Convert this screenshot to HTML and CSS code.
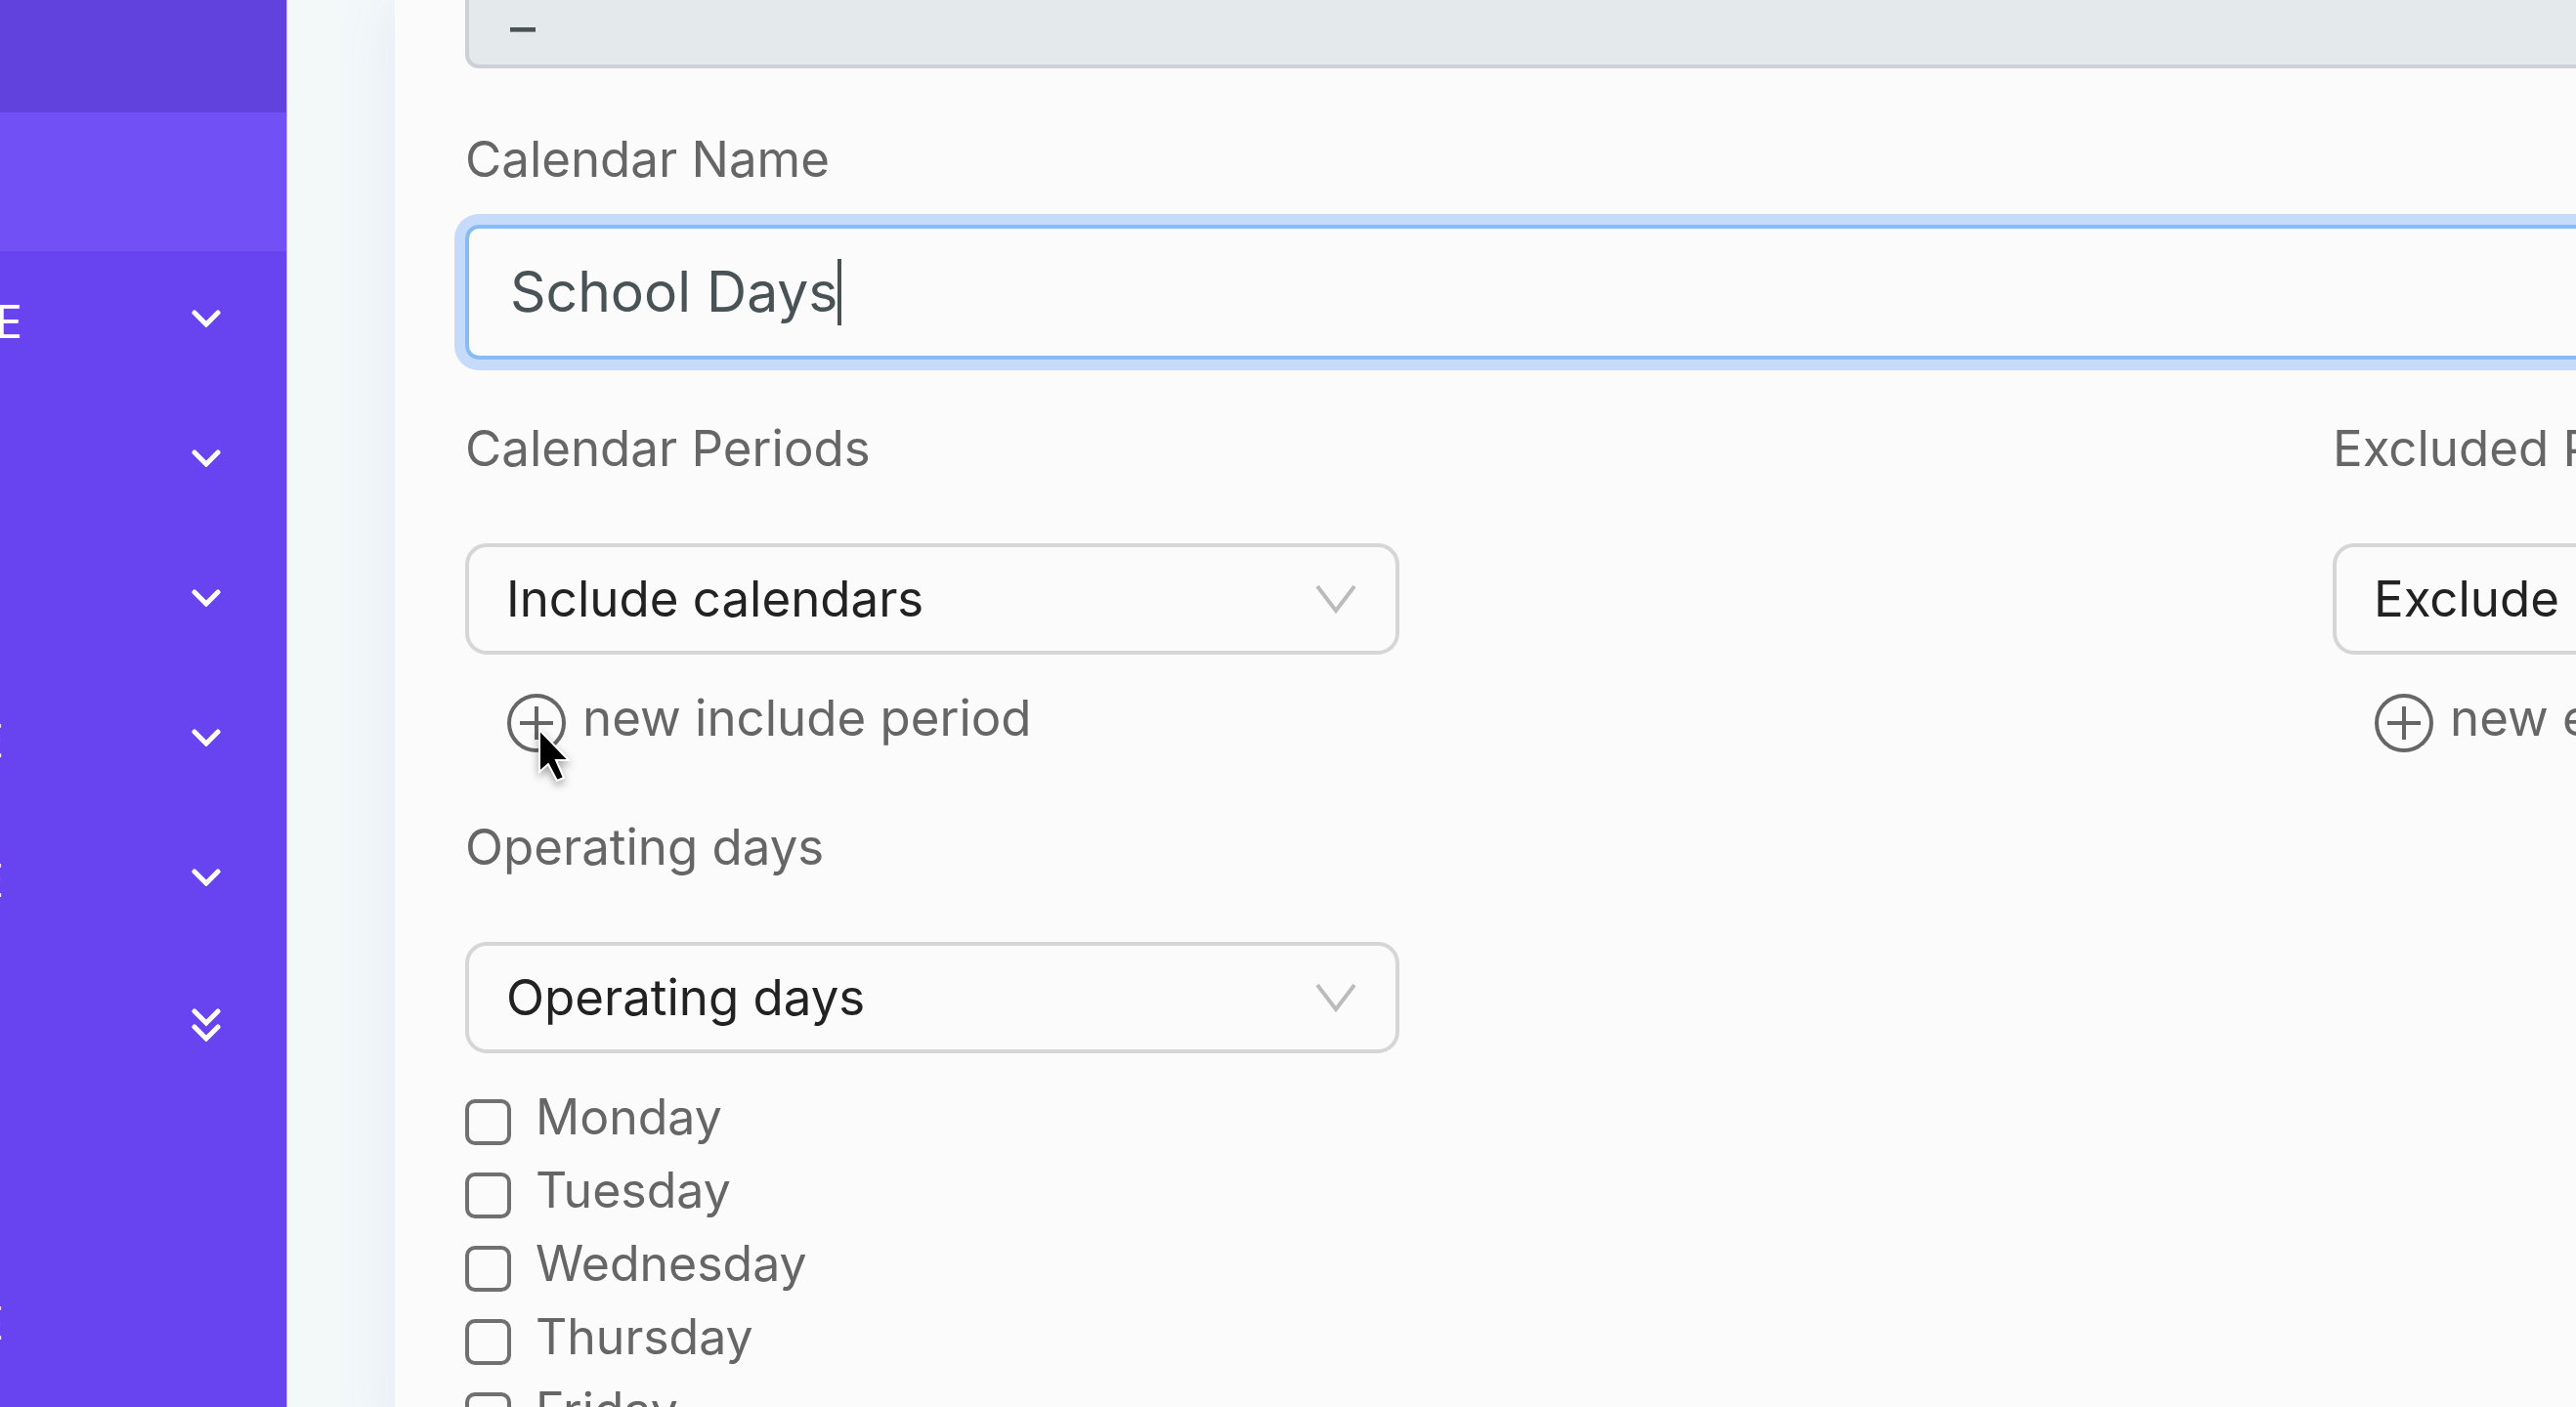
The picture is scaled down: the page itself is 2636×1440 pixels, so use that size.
FILE: index.html
```html
<!DOCTYPE html>
<html lang="en">
<head>
  <meta charset="UTF-8" />
  <meta name="viewport" content="width=device-width, initial-scale=1.0" />
  <title>Calendar</title>
  <link rel="stylesheet" href="styles.css">
</head>
<body>
  <div class="layout">
    <nav class="sidebar">
      <div class="menu-head"></div>
      <div class="menu-item active"></div>
      <div class="menu-item">
        <span class="menu-label wide">E</span>
        <svg class="chevron" viewBox="0 0 30 18"><path d="M3 3l12 12L27 3"/></svg>
      </div>
      <div class="menu-item">
        <svg class="chevron" viewBox="0 0 30 18"><path d="M3 3l12 12L27 3"/></svg>
      </div>
      <div class="menu-item">
        <svg class="chevron" viewBox="0 0 30 18"><path d="M3 3l12 12L27 3"/></svg>
      </div>
      <div class="menu-item">
        <span class="menu-label">E</span>
        <svg class="chevron" viewBox="0 0 30 18"><path d="M3 3l12 12L27 3"/></svg>
      </div>
      <div class="menu-item">
        <span class="menu-label">E</span>
        <svg class="chevron" viewBox="0 0 30 18"><path d="M3 3l12 12L27 3"/></svg>
      </div>
      <div class="menu-item more">
        <svg class="chevron double" viewBox="0 0 30 34"><path d="M3 3l12 12L27 3M3 19l12 12L27 19"/></svg>
      </div>
      <div class="menu-item last">
        <span class="menu-label">E</span>
      </div>
    </nav>

    <main class="content">
      <form class="card">
        <div class="input-box disabled">
          <input type="text" value="_" aria-label="Calendar code" disabled>
        </div>

        <label class="title" for="name">Calendar Name</label>
        <div class="input-box focused">
          <input type="text" id="name" value="School Days">
          <span class="caret"></span>
        </div>

        <div class="columns">
          <div class="column">
            <label class="title" for="include">Calendar Periods</label>
            <div class="select-box">
              <select id="include"><option>Include calendars</option></select>
              <svg class="arrow" viewBox="0 0 42 30"><path d="M2 1l19 25L40 1"/></svg>
            </div>
            <button type="button" class="add">
              <svg class="plus" viewBox="0 0 62 62"><circle cx="31" cy="31" r="28"/><path d="M31 14v34M14 31h34"/></svg>
              new include period
              <svg class="cursor" viewBox="0 0 44 68"><path d="M6 3v43l9-8 9 17 7-3-8-18h13z"/></svg>
            </button>
          </div>
          <div class="column">
            <label class="title" for="exclude">Excluded Periods</label>
            <div class="select-box">
              <select id="exclude"><option>Exclude</option></select>
              <svg class="arrow" viewBox="0 0 42 30"><path d="M2 1l19 25L40 1"/></svg>
            </div>
            <button type="button" class="add">
              <svg class="plus" viewBox="0 0 62 62"><circle cx="31" cy="31" r="28"/><path d="M31 14v34M14 31h34"/></svg>
              new exclude period
            </button>
          </div>
        </div>

        <div class="columns">
          <div class="column">
            <label class="title" for="days">Operating days</label>
            <div class="select-box">
              <select id="days"><option>Operating days</option></select>
              <svg class="arrow" viewBox="0 0 42 30"><path d="M2 1l19 25L40 1"/></svg>
            </div>
            <div class="days">
              <label class="day"><input type="checkbox">Monday</label>
              <label class="day"><input type="checkbox">Tuesday</label>
              <label class="day"><input type="checkbox">Wednesday</label>
              <label class="day"><input type="checkbox">Thursday</label>
              <label class="day"><input type="checkbox">Friday</label>
            </div>
          </div>
        </div>
      </form>
    </main>
  </div>
</body>
</html>
```

FILE: styles.css
```css
:root {
  --purple: #6744EF;
  --purple-dark: #6142DD;
  --purple-light: #7150F5;
  --page-bg: #F3F9F9;
  --card-bg: #FBFBFB;
  --text: #666666;
  --text-dark: #222222;
  --border: #D6D6D6;
}

* {
  box-sizing: border-box;
}

body {
  margin: 0;
  font-family: Inter, "Liberation Sans", sans-serif;
  font-size: 51px;
  line-height: 60px;
  color: var(--text);
  background-color: var(--page-bg);
  overflow: hidden;
}

input, select, button {
  font: inherit;
  color: inherit;
  margin: 0;
  padding: 0;
  border: none;
  background: none;
}

.layout {
  display: flex;
  height: 100vh;
}

/* sidebar */
.sidebar {
  flex: none;
  width: 294px;
  background-color: var(--purple);
  border-right: 1px solid #B5A9EE;
  color: #FFFFFF;
}

.menu-head {
  height: 115px;
  background-color: var(--purple-dark);
}

.menu-item {
  display: flex;
  align-items: center;
  height: 143px;
  padding-right: 67px;
  font-size: 46px;
}
.menu-item.active {
  height: 142px;
  background-color: var(--purple-light);
}
.menu-item.more {
  height: 154px;
}
.menu-item.last {
  margin-top: 156px;
}

.menu-label {
  display: flex;
  justify-content: flex-end;
  width: 4px;
  overflow: hidden;
}
.menu-label.wide {
  width: 23px;
}

.chevron {
  width: 30px;
  height: 18px;
  margin: 0 0 5px auto;
  fill: none;
  stroke: #FFFFFF;
  stroke-width: 5;
  stroke-linecap: round;
}
.chevron.double {
  height: 34px;
  margin-bottom: 0;
}

/* content */
.content {
  flex: 1;
  min-width: 0;
  padding-left: 110px;
}

.card {
  width: 150vw;
  min-height: 100vh;
  padding: 0 60px 0 72px;
  background-color: var(--card-bg);
  box-shadow: 0 0 60px rgba(103, 68, 239, 0.1);
}

.title {
  display: block;
}

.input-box {
  display: flex;
  align-items: center;
  height: 138px;
  padding: 0 42px;
  border: 4px solid #86BBF5;
  border-radius: 14px;
  font-size: 57px;
  line-height: 80px;
  color: #495255;
}
.input-box input {
  field-sizing: content;
  height: 80px;
  outline: none;
  caret-color: transparent;
}
.input-box.disabled {
  height: 70px;
  margin-bottom: 63px;
  padding-bottom: 50px;
  border-color: #CBD1D6;
  border-top: none;
  border-radius: 0 0 14px 14px;
  background-color: #E4E9EC;
}
.input-box.focused {
  margin: 37px 0 61px;
  box-shadow: 0 0 0 11px #C6DAFA;
}

.caret {
  width: 4px;
  height: 68px;
  background-color: #495255;
}

.columns {
  display: grid;
  grid-template-columns: 1fr 1fr;
}

.select-box {
  position: relative;
  width: 50%;
  margin-top: 67px;
}
.select-box select {
  display: block;
  width: 100%;
  height: 114px;
  padding: 0 38px;
  appearance: none;
  border: 4px solid var(--border);
  border-radius: 22px;
  color: var(--text-dark);
}
.arrow {
  position: absolute;
  top: 43px;
  right: 44px;
  width: 42px;
  height: 30px;
  fill: none;
  stroke: #BBBBBB;
  stroke-width: 4;
  pointer-events: none;
}

.add {
  position: relative;
  display: flex;
  align-items: center;
  gap: 16px;
  margin: 35px 0 72px 42px;
  height: 60px;
}
.plus {
  width: 62px;
  height: 62px;
  margin-top: 10px;
  fill: none;
  stroke: var(--text);
  stroke-width: 4;
}
.cursor {
  position: absolute;
  top: 39px;
  left: 28px;
  width: 44px;
  height: 68px;
  fill: #000000;
  stroke: #FFFFFF;
  stroke-width: 2;
  filter: drop-shadow(0 4px 4px rgba(0, 0, 0, 0.35));
}

.days {
  margin-top: 27px;
  font-size: 50px;
}
.day {
  display: flex;
  align-items: center;
  gap: 25px;
  height: 75px;
}
.day input {
  width: 47px;
  height: 47px;
  margin-top: 12px;
  appearance: none;
  border: 4px solid #707070;
  border-radius: 10px;
}
```
